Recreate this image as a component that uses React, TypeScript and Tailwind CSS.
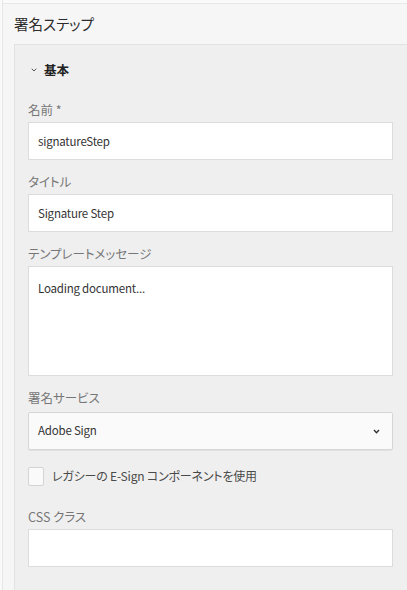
import { ChevronDown } from 'lucide-react'

const font = "font-['Noto_Sans_CJK_JP',sans-serif] [font-feature-settings:'palt']"

function Label({ children }: { children: React.ReactNode }) {
  return <div className="h-[18px] text-[12.5px] leading-[18px] text-[#767676]">{children}</div>
}

function TextInput({ value, className = 'h-[38px]' }: { value?: string; className?: string }) {
  return (
    <div
      className={`mt-[3px] flex items-start border border-[#dcdcdc] bg-white pl-[9px] text-[11.5px] tracking-[-0.2px] text-[#333] ${className}`}
    >
      <span className="leading-[36px]">{value}</span>
    </div>
  )
}

export default function App() {
  return (
    <div className={`flex h-[590px] w-[407px] overflow-hidden bg-[#f6f6f6] ${font}`}>
      <div className="w-[3px] border-r border-[#e6e6e6] bg-[#fafafa]" />
      <div className="flex flex-1 flex-col border-t-[3px] border-[#fafafa]">
        <div className="flex flex-col border-t border-[#e8e8e8]">
          <div className="flex h-[40px] items-center pl-[11px] text-[14.5px] text-[#2c2c2c]">
            署名ステップ
          </div>
        </div>
        <div className="ml-[11px] flex flex-1 flex-col border-t border-l border-[#e2e2e2] bg-[#efefef] pr-[14px] pl-[13px]">
          <div className="mt-[16px] flex h-[18px] items-center gap-[6px] pl-[2px] text-[12.5px] font-bold text-[#222]">
            <ChevronDown className="h-[8px] w-[8px] text-[#555]" strokeWidth={3} />
            <span>基本</span>
          </div>

          <div className="mt-[22px]">
            <Label>名前 *</Label>
            <TextInput value="signatureStep" />
          </div>
          <div className="mt-[13px]">
            <Label>タイトル</Label>
            <TextInput value="Signature Step" />
          </div>
          <div className="mt-[13px]">
            <Label>テンプレートメッセージ</Label>
            <TextInput value="Loading document..." className="h-[110px] pt-[3px]" />
          </div>
          <div className="mt-[13px]">
            <Label>署名サービス</Label>
            <div className="mt-[5px] flex h-[38px] items-center justify-between rounded-[2px] border border-[#d6d6d6] bg-[#fafafa] pr-[12px] pl-[9px] text-[11.5px] tracking-[-0.2px] text-[#333] shadow-[0_1px_1px_rgba(0,0,0,0.06)]">
              <span>Adobe Sign</span>
              <svg viewBox="0 0 8 6" className="h-[5px] w-[7px]">
                <path d="M1 1.2 L4 4.4 L7 1.2" fill="none" stroke="#333" strokeWidth="1.7" />
              </svg>
            </div>
          </div>
          <div className="mt-[16px] flex h-[20px] items-center gap-[8px]">
            <div className="h-[19px] w-[16px] rounded-[2px] border border-[#d4d4d4] bg-[#fafafa]" />
            <span className="text-[12px] tracking-[-0.2px] text-[#4a4a4a]">レガシーの E-Sign コンポーネントを使用</span>
          </div>
          <div className="mt-[22px]">
            <Label>CSS クラス</Label>
            <TextInput />
          </div>
        </div>
      </div>
    </div>
  )
}
